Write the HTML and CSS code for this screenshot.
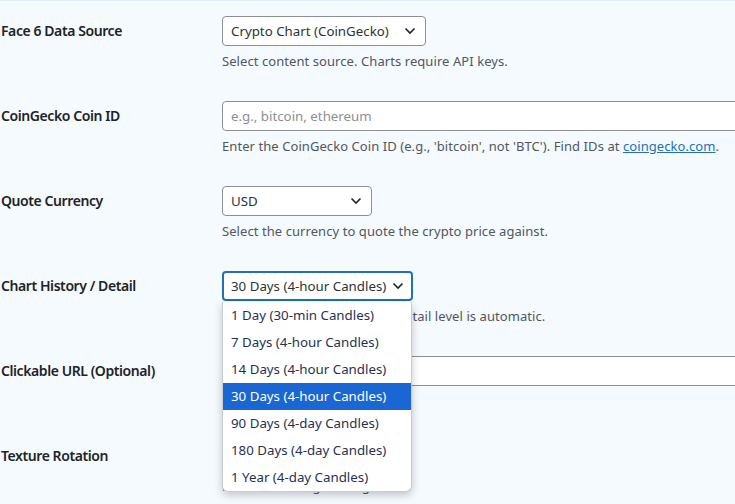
FILE: index.html
```html
<!DOCTYPE html>
<html lang="en">
<head>
<meta charset="utf-8">
<title>Face 6 Settings</title>
<link rel="stylesheet" href="styles.css">
</head>
<body>
<div class="page">
  <div class="form">
    <div class="row">
      <div class="label">Face 6 Data Source</div>
      <div class="field">
        <div class="select w1"><span>Crypto Chart (CoinGecko)</span><svg class="chev" width="12" height="8" viewBox="0 0 12 8"><path d="M1.5 1.5 L6 6 L10.5 1.5" fill="none" stroke="#1d2327" stroke-width="1.6"/></svg></div>
        <p class="desc">Select content source. Charts require API keys.</p>
      </div>
    </div>
    <div class="row">
      <div class="label">CoinGecko Coin ID</div>
      <div class="field">
        <div class="input"><span class="ph">e.g., bitcoin, ethereum</span></div>
        <p class="desc">Enter the CoinGecko Coin ID (e.g., 'bitcoin', not 'BTC'). Find IDs at <a href="#">coingecko.com</a>.</p>
      </div>
    </div>
    <div class="row">
      <div class="label">Quote Currency</div>
      <div class="field">
        <div class="select w3"><span>USD</span><svg class="chev" width="12" height="8" viewBox="0 0 12 8"><path d="M1.5 1.5 L6 6 L10.5 1.5" fill="none" stroke="#1d2327" stroke-width="1.6"/></svg></div>
        <p class="desc">Select the currency to quote the crypto price against.</p>
      </div>
    </div>
    <div class="row">
      <div class="label">Chart History / Detail</div>
      <div class="field">
        <div class="select w4 focus"><span>30 Days (4-hour Candles)</span><svg class="chev" width="12" height="8" viewBox="0 0 12 8"><path d="M1.5 1.5 L6 6 L10.5 1.5" fill="none" stroke="#1d2327" stroke-width="1.6"/></svg></div>
        <p class="desc">Select the chart time range. Detail level is automatic.</p>
        <ul class="menu">
          <li>1 Day (30-min Candles)</li>
          <li>7 Days (4-hour Candles)</li>
          <li>14 Days (4-hour Candles)</li>
          <li class="sel">30 Days (4-hour Candles)</li>
          <li>90 Days (4-day Candles)</li>
          <li>180 Days (4-day Candles)</li>
          <li>1 Year (4-day Candles)</li>
        </ul>
      </div>
    </div>
    <div class="row">
      <div class="label">Clickable URL (Optional)</div>
      <div class="field">
        <div class="input"></div>
      </div>
    </div>
    <div class="row">
      <div class="label">Texture Rotation</div>
      <div class="field">
        <div class="select w3"></div>
        <p class="desc">Rotate the image to align.</p>
      </div>
    </div>
  </div>
</div>
</body>
</html>
```

FILE: styles.css
```css
html, body {
  margin: 0;
  padding: 0;
  background: #f5faff;
}
body {
  font-family: "Noto Sans", "Open Sans", sans-serif;
  color: #1d2327;
  overflow: hidden;
  width: 735px;
  height: 504px;
}
.page {
  border-top: 1px solid #e1edf9;
  width: 760px;
}
.form {
  display: flex;
  flex-direction: column;
}
.row {
  display: grid;
  grid-template-columns: 222px 1fr;
  height: 85px;
  box-sizing: border-box;
  padding-top: 15px;
}
.label {
  font-size: 14px;
  font-weight: 600;
  line-height: 30px;
  padding-left: 1px;
  letter-spacing: -0.42px;
  white-space: nowrap;
}
.field {
  position: relative;
}
.select, .input {
  box-sizing: border-box;
  height: 30px;
  border: 1px solid #8c8f94;
  border-radius: 4px;
  background: #fff;
  font-size: 13.3px;
  line-height: 28px;
  padding: 0 8px;
  display: flex;
  align-items: center;
  justify-content: space-between;
  color: #2c3338;
  white-space: nowrap;
}
.w1 { width: 204px; padding-right: 9px; }
.w3 { width: 150px; padding-right: 9px; }
.w4 { width: 191px; padding-right: 8px; }
.focus {
  border: 2px solid #2271b1;
  padding-left: 7px;
  padding-right: 7px;
}
.chev { flex: none; }
.input {
  width: 540px;
}
.ph {
  color: #8c8f94;
}
.desc {
  margin: 5px 0 0;
  font-size: 13px;
  line-height: 20px;
  color: #50575e;
  letter-spacing: 0.07px;
  white-space: nowrap;
}
.desc a {
  color: #2271b1;
}
.menu {
  position: absolute;
  left: 0;
  top: 31px;
  width: 190px;
  margin: 0;
  padding: 0;
  list-style: none;
  background: #fff;
  border: 1px solid #c9ccd1;
  border-top: none;
  border-radius: 0 0 6px 6px;
  box-shadow: 0 3px 8px rgba(0, 0, 0, 0.22);
  box-sizing: border-box;
  z-index: 5;
}
.menu li {
  height: 27px;
  line-height: 27px;
  font-size: 13.3px;
  padding-left: 8px;
  color: #1f3252;
  white-space: nowrap;
}
.menu li.sel {
  background: #1a66d2;
  color: #fff;
}
```
